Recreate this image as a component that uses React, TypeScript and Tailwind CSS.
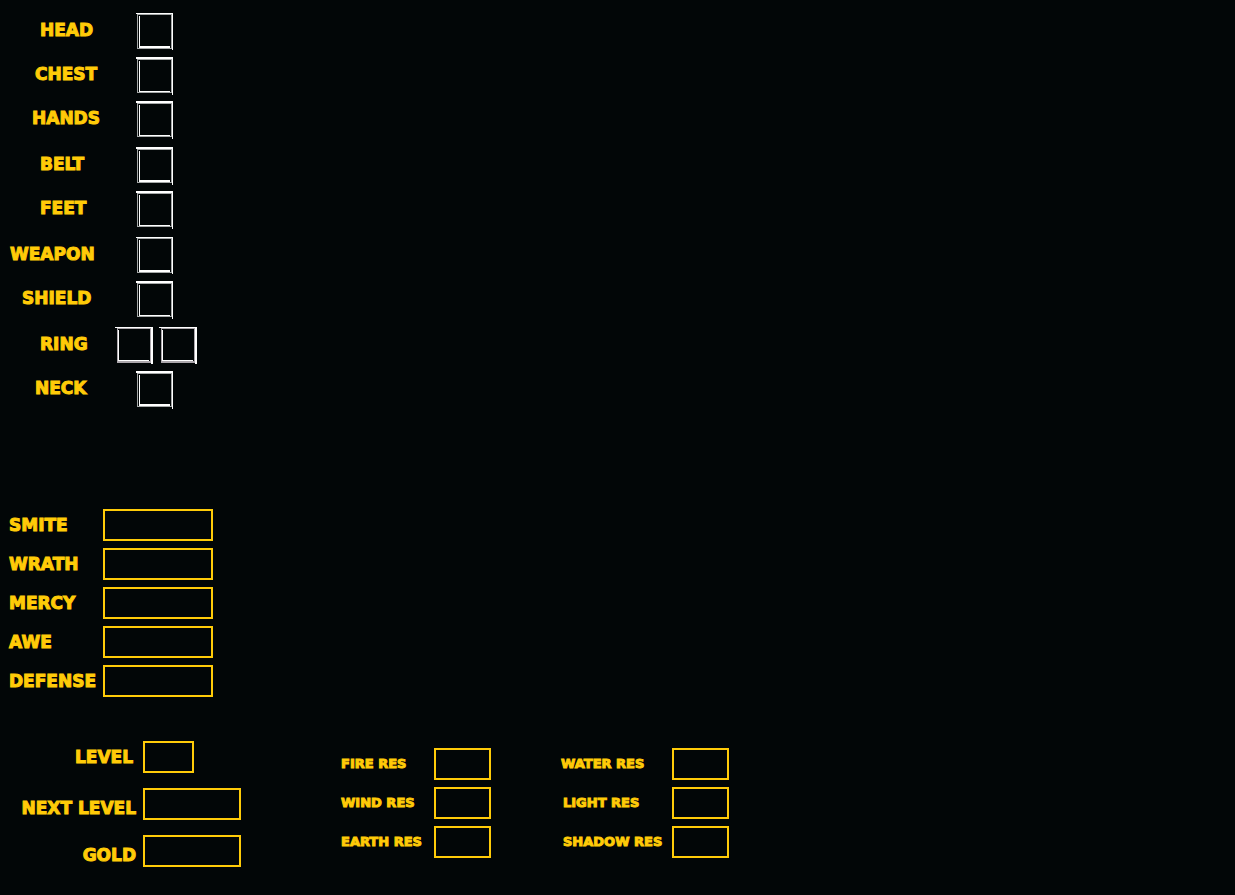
import { useId } from "react";

type SlotShape = {
  topWeight: 1 | 2;
  innerWeight: 1 | 2;
};

type EquipmentRow = {
  label: string;
  indent: string;
  row: string;
  shape: SlotShape;
};

const EQUIPMENT: EquipmentRow[] = [
  { label: "HEAD", indent: "pl-10", row: "h-11", shape: { topWeight: 1, innerWeight: 2 } },
  { label: "CHEST", indent: "pl-[35px]", row: "h-11", shape: { topWeight: 2, innerWeight: 1 } },
  { label: "HANDS", indent: "pl-8", row: "h-[46px]", shape: { topWeight: 2, innerWeight: 1 } },
  { label: "BELT", indent: "pl-10", row: "h-11", shape: { topWeight: 2, innerWeight: 2 } },
  { label: "FEET", indent: "pl-10", row: "h-[46px]", shape: { topWeight: 2, innerWeight: 1 } },
  { label: "WEAPON", indent: "pl-[10px]", row: "h-11", shape: { topWeight: 1, innerWeight: 2 } },
  { label: "SHIELD", indent: "pl-[22px]", row: "h-[46px]", shape: { topWeight: 2, innerWeight: 1 } },
  { label: "RING", indent: "pl-10", row: "h-11", shape: { topWeight: 1, innerWeight: 1 } },
  { label: "NECK", indent: "pl-[35px]", row: "h-11", shape: { topWeight: 2, innerWeight: 2 } },
];

const STATS = ["SMITE", "WRATH", "MERCY", "AWE", "DEFENSE"];

const PROGRESS = [
  { label: "LEVEL", width: "w-[51px]", inset: "pr-[10px]" },
  { label: "NEXT LEVEL", width: "w-[98px]", inset: "pr-[7px] pt-1 -mb-1" },
  { label: "GOLD", width: "w-[98px]", inset: "pr-[7px] pt-1 -mb-1" },
];

const LEFT_RESISTANCES = ["FIRE RES", "WIND RES", "EARTH RES"];
const RIGHT_RESISTANCES = ["WATER RES", "LIGHT RES", "SHADOW RES"];

const LARGE = "text-[17px] leading-8";
const SMALL = "text-[13px] leading-8";

function Slot({ name, shape }: { name: string; shape: SlotShape }) {
  const t = shape.topWeight;
  const i = shape.innerWeight;
  return (
    <button type="button" aria-label={name} className="block shrink-0">
      <svg width="37" height="38" viewBox="0 0 37 38" shapeRendering="crispEdges" className="block">
        <path d={`M1 ${t}H36V36H1ZM2 ${t + 1}V35H35V${t + 1}Z`} fill="#a5a8a8" fillRule="evenodd" />
        <rect x="0" y="0" width="37" height={t} fill="#fff" />
        <rect x="36" y="0" width="1" height={t === 2 ? 38 : 37} fill="#fff" />
        <rect x="3" y={t + 2} width="1" height={33 - t} fill="#fff" />
        <rect x="3" y={35 - i} width="31" height={i} fill="#fff" />
      </svg>
    </button>
  );
}

function RingSlot({ name }: { name: string }) {
  return (
    <button type="button" aria-label={name} className="block shrink-0">
      <svg width="38" height="37" viewBox="0 0 38 37" shapeRendering="crispEdges" className="block">
        <path d="M2 1H36V36H2ZM3 2V34H35V2Z" fill="#aba6ab" fillRule="evenodd" />
        <rect x="0" y="0" width="38" height="1" fill="#fff" />
        <rect x="36" y="0" width="2" height="37" fill="#fff" />
        <rect x="3" y="3" width="1" height="31" fill="#fff" />
        <rect x="3" y="33" width="31" height="1" fill="#fff" />
      </svg>
    </button>
  );
}

function Field({
  label,
  labelClass,
  boxClass,
}: {
  label: string;
  labelClass: string;
  boxClass: string;
}) {
  const id = useId();
  return (
    <div className="flex items-center">
      <label htmlFor={id} className={`shrink-0 whitespace-nowrap ${labelClass}`}>
        {label}
      </label>
      <input
        id={id}
        type="text"
        className={`h-8 shrink-0 border-2 border-[#ffcb08] bg-transparent px-1 text-sm outline-none ${boxClass}`}
      />
    </div>
  );
}

export default function App() {
  return (
    <main className="min-h-screen bg-[#020607] font-['DejaVu_Sans',sans-serif] font-black text-[#ffcb08] [-webkit-text-stroke:1px_#ffcb08]">
      <section aria-label="Equipment" className="pt-[13px]">
        {EQUIPMENT.map(({ label, indent, row, shape }) => (
          <div key={label} className={`flex items-start ${row}`}>
            <span
              className={`shrink-0 text-[17px] leading-[34px] ${indent} ${label === "RING" ? "w-[115px]" : "w-[136px]"}`}
            >
              {label}
            </span>
            {label === "RING" ? (
              <div className="flex gap-[6px]">
                <RingSlot name="Left ring" />
                <RingSlot name="Right ring" />
              </div>
            ) : (
              <Slot name={label} shape={shape} />
            )}
          </div>
        ))}
      </section>

      <section aria-label="Attributes" className="mt-[94px] flex flex-col gap-[7px]">
        {STATS.map((label) => (
          <Field key={label} label={label} labelClass={`w-[103px] pl-[9px] ${LARGE}`} boxClass="w-[110px]" />
        ))}
      </section>

      <div className="mt-11 flex items-start">
        <section aria-label="Progress" className="flex w-[341px] shrink-0 flex-col gap-[15px]">
          {PROGRESS.map(({ label, width, inset }) => (
            <Field key={label} label={label} labelClass={`w-[143px] text-right ${LARGE} ${inset}`} boxClass={width} />
          ))}
        </section>
        <section aria-label="Resistances" className="flex gap-[70px] pt-[7px]">
          <div className="flex flex-col gap-[7px]">
            {LEFT_RESISTANCES.map((label) => (
              <Field key={label} label={label} labelClass={`w-[93px] ${SMALL}`} boxClass="w-[57px]" />
            ))}
          </div>
          <div className="flex flex-col gap-[7px]">
            {RIGHT_RESISTANCES.map((label) => (
              <Field key={label} label={label} labelClass={`w-[111px] ${label === "WATER RES" ? "" : "pl-[2px]"} ${SMALL}`} boxClass="w-[57px]" />
            ))}
          </div>
        </section>
      </div>
    </main>
  );
}
